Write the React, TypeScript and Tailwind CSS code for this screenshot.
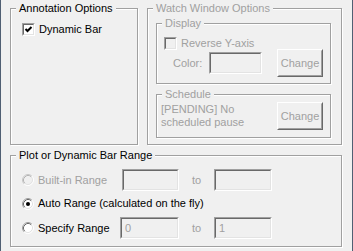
import React from "react";

type GroupProps = {
  label: string;
  disabled?: boolean;
  className?: string;
  children?: React.ReactNode;
};

function Group({ label, disabled, className = "", children }: GroupProps) {
  return (
    <div
      className={`relative border border-[#a0a0a0] shadow-[inset_1px_1px_0_#fff,1px_1px_0_#fff] ${className}`}
    >
      <span
        className={`absolute left-[5px] top-[-7px] bg-[#f0f0f0] px-[3px] leading-[13px] whitespace-nowrap ${
          disabled ? "text-[#a0a0a0]" : "text-black"
        }`}
      >
        {label}
      </span>
      {children}
    </div>
  );
}

function Sunken({ className = "", children }: { className?: string; children?: React.ReactNode }) {
  return (
    <div
      className={`border border-t-[#a0a0a0] border-l-[#a0a0a0] border-b-white border-r-white ${className}`}
    >
      <div className="h-full border border-t-[#696969] border-l-[#696969] border-b-[#e3e3e3] border-r-[#e3e3e3] bg-[#f0f0f0] pl-[2px] flex items-center text-[#a0a0a0]">
        {children}
      </div>
    </div>
  );
}

function Button({ label }: { label: string }) {
  return (
    <div className="w-[46px] h-[28px] border border-t-white border-l-white border-b-[#696969] border-r-[#696969]">
      <div className="h-full border border-t-[#f0f0f0] border-l-[#f0f0f0] border-b-[#a0a0a0] border-r-[#a0a0a0] flex items-center justify-center text-[#a0a0a0]">
        {label}
      </div>
    </div>
  );
}

function Checkbox({ checked, disabled }: { checked?: boolean; disabled?: boolean }) {
  return (
    <div className="w-[13px] h-[13px] border border-t-[#a0a0a0] border-l-[#a0a0a0] border-b-white border-r-white shrink-0">
      <div
        className={`h-full border border-t-[#696969] border-l-[#696969] border-b-[#e3e3e3] border-r-[#e3e3e3] ${
          disabled ? "bg-[#f0f0f0]" : "bg-white"
        }`}
      >
        {checked && (
          <svg width="9" height="9" viewBox="0 0 9 9">
            <path d="M1.5 4 L3.5 6 L7.5 2" fill="none" stroke="#000" strokeWidth="2" />
          </svg>
        )}
      </div>
    </div>
  );
}

function Radio({ checked, disabled }: { checked?: boolean; disabled?: boolean }) {
  return (
    <svg width="12" height="12" viewBox="0 0 12 12" className="shrink-0">
      <circle cx="6" cy="6" r="5" fill={disabled ? "#f0f0f0" : "#fff"} />
      <path d="M2.11 9.89A5.5 5.5 0 0 1 9.89 2.11" fill="none" stroke={disabled ? "#c8c8c8" : "#a0a0a0"} />
      <path d="M9.89 2.11A5.5 5.5 0 0 1 2.11 9.89" fill="none" stroke="#fff" />
      <path d="M2.82 9.18A4.5 4.5 0 0 1 9.18 2.82" fill="none" stroke={disabled ? "#b4b4b4" : "#696969"} />
      <path d="M9.18 2.82A4.5 4.5 0 0 1 2.82 9.18" fill="none" stroke="#e3e3e3" />
      {checked && <circle cx="6" cy="6" r="2" fill="#000" />}
    </svg>
  );
}

export default function App() {
  return (
    <div className="w-[353px] h-[251px] bg-[#f0f0f0] border-x border-[#505f73] pl-[9px] pt-[8px] font-['Liberation_Sans',Arial,sans-serif] text-[11px] leading-[13px] text-black overflow-hidden">
      <div className="flex">
        <Group label="Annotation Options" className="w-[128px] h-[137px]">
          <div className="flex items-center pt-[14px] pl-[11px]">
            <Checkbox checked />
            <span className="ml-[4px]">Dynamic Bar</span>
          </div>
        </Group>

        <Group label="Watch Window Options" disabled className="ml-[9px] w-[195px] h-[137px]">
          <div className="pl-[8px] pt-[14px]">
            <Group label="Display" disabled className="w-[175px] h-[61px]">
              <div className="flex items-center pl-[7px] pt-[13px] text-[#a0a0a0]">
                <Checkbox disabled />
                <span className="ml-[4px]">Reverse Y-axis</span>
              </div>
              <div className="flex items-center pl-[16px] mt-[-1px] h-[28px] text-[#a0a0a0]">
                <span className="w-[36px]">Color:</span>
                <Sunken className="w-[53px] h-[22px]" />
                <div className="ml-[15px]">
                  <Button label="Change" />
                </div>
              </div>
            </Group>
            <Group label="Schedule" disabled className="mt-[10px] w-[175px] h-[44px]">
              <div className="flex items-center pt-[7px]">
                <div className="w-[120px] pl-[4px] text-[#a0a0a0]">[PENDING] No scheduled pause</div>
                <Button label="Change" />
              </div>
            </Group>
          </div>
        </Group>
      </div>

      <Group label="Plot or Dynamic Bar Range" className="mt-[10px] w-[332px] h-[92px]">
        <div className="pl-[11px] pt-[13px]">
          <div className="flex items-center h-[22px]">
            <div className="flex items-center w-[100px] text-[#a0a0a0]">
              <Radio disabled />
              <span className="ml-[4px]">Built-in Range</span>
            </div>
            <Sunken className="w-[57px] h-[22px]" />
            <span className="ml-[13px] w-[22px] text-[#a0a0a0]">to</span>
            <Sunken className="w-[58px] h-[22px]" />
          </div>
          <div className="flex items-center h-[13px] mt-[6px]">
            <Radio checked />
            <span className="ml-[4px]">Auto Range (calculated on the fly)</span>
          </div>
          <div className="flex items-center h-[22px] mt-[7px]">
            <div className="flex items-center w-[98px]">
              <Radio />
              <span className="ml-[4px]">Specify Range</span>
            </div>
            <Sunken className="w-[59px] h-[22px]">
              <span className="pl-[1px]">0</span>
            </Sunken>
            <span className="ml-[13px] w-[22px] text-[#a0a0a0]">to</span>
            <Sunken className="w-[58px] h-[22px]">
              <span className="pl-[1px]">1</span>
            </Sunken>
          </div>
        </div>
      </Group>
    </div>
  );
}
